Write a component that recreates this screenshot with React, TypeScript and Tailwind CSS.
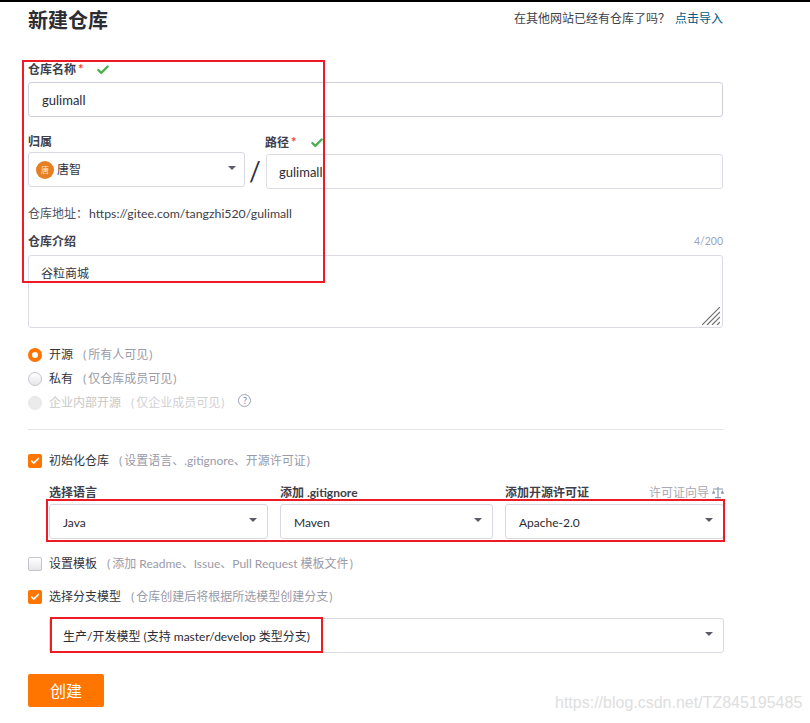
import { Check } from "lucide-react";
import type { ReactNode } from "react";

function Caret() {
  return <span className="h-0 w-0 border-x-[4px] border-t-[4px] border-x-transparent border-t-[#5a5a68]" />;
}

function SelectBox({ value, className, tight }: { value: ReactNode; className: string; tight?: boolean }) {
  return (
    <div className={`flex h-[35px] items-center justify-between rounded-[3px] border border-[#d9d9e3] text-[12px] text-[#2b2b33] ${tight ? "pl-[7px] pr-[8px]" : "pl-[13px] pr-[10px]"} ${className}`}>
      <span className={`flex items-center ${tight ? "" : "pt-[2px]"}`}>{value}</span>
      <span className="-mt-[4px] flex"><Caret /></span>
    </div>
  );
}

function Radio({ state }: { state: "on" | "off" | "disabled" }) {
  if (state === "on") {
    return (
      <span className="flex h-[14px] w-[14px] items-center justify-center rounded-full bg-[#ff7500]">
        <span className="h-[6px] w-[6px] rounded-full bg-white" />
      </span>
    );
  }
  if (state === "disabled") return <span className="h-[14px] w-[14px] rounded-full border border-[#e6e6e6] bg-[#ebebeb]" />;
  return <span className="h-[14px] w-[14px] rounded-full border border-[#c5c5cf] bg-gradient-to-b from-white to-[#e6e6ea]" />;
}

function Box({ checked }: { checked: boolean }) {
  if (!checked) return <span className="h-[14px] w-[14px] rounded-[2px] border border-[#c5c5cf] bg-gradient-to-b from-white to-[#e6e6ea]" />;
  return (
    <span className="flex h-[14px] w-[14px] items-center justify-center rounded-[2px] bg-[#ff7500]">
      <Check className="h-[10px] w-[10px] text-white" strokeWidth={4} />
    </span>
  );
}

function Option({ control, label, note, muted, className }: { control: ReactNode; label: string; note: string; muted?: boolean; className: string }) {
  return (
    <div className={`flex h-[16px] items-center text-[12px] ${className}`}>
      {control}
      <span className={`ml-[7px] ${muted ? "text-[#c8c8c8]" : "text-[#33333b]"}`}>{label}</span>
      <span className={`ml-[10px] ${muted ? "text-[#d0d0d4]" : "text-[#9a9aa8]"}`}>
        <span className="mr-[2px]">(</span>{note}<span className="ml-[1px]">)</span>
      </span>
    </div>
  );
}

function Grip() {
  return (
    <svg className="absolute bottom-[2px] right-[2px]" width="18" height="18" viewBox="0 0 18 18" stroke="#707070" strokeWidth="1.2">
      <path d="M0 18 18 0M5 18 18 5M10 18 18 10M15 18 18 15" />
    </svg>
  );
}

function ScaleIcon() {
  return (
    <svg className="ml-[3px]" width="12" height="12" viewBox="0 0 12 12" fill="#8a9ab0">
      <path d="M5.4 0h1.2v1.5H11V2.6H6.6V10H9v1.2H3V10h2.4V2.6H1V1.5h4.4z" />
      <path d="M0 6.2 1.6 3l1.6 3.2c-.3.8-2.9.8-3.2 0zM8.8 6.2 10.4 3 12 6.2c-.3.8-2.9.8-3.2 0z" />
    </svg>
  );
}

export default function App() {
  return (
    <div
      className="relative h-[723px] w-[810px] overflow-hidden border-t-2 border-black bg-white"
      style={{ fontFamily: 'Lato, "Noto Sans CJK SC", sans-serif' }}
    >
      <div className="ml-[28px] w-[695px]">
        <div className="flex h-[36px] items-center justify-between">
          <h1 className="-mt-[1px] text-[20px] font-bold text-[#2c2c33]">新建仓库</h1>
          <div className="-mt-[2px] text-[12px] text-[#40404a]">
            在其他网站已经有仓库了吗？<span className="ml-[5px] text-[#005980]">点击导入</span>
          </div>
        </div>

        <div className="mt-[23px] flex h-[18px] items-center text-[12px] font-bold text-[#40404a]">
          仓库名称<span className="ml-[2px] text-[13px] text-[#ff3b30]">*</span>
          <Check className="ml-[12px] h-[14px] w-[14px] text-[#4caf50]" strokeWidth={4} />
        </div>
        <div className="mt-[3px] flex h-[35px] items-center rounded-[3px] border border-[#d0d0dc] pl-[13px] pt-[2px] text-[13px] text-[#2b2b33]">gulimall</div>

        <div className="mt-[14px] flex">
          <div className="w-[217px]">
            <div className="h-[21px] pt-[2px] text-[12px] font-bold text-[#40404a]">归属</div>
            <SelectBox
              tight
              className=""
              value={
                <>
                  <span className="flex h-[18px] w-[18px] items-center justify-center rounded-full bg-[#e67e22] text-[8px] text-[#ffe4cc]">唐</span>
                  <span className="ml-[3px] text-[#33333b]">唐智</span>
                </>
              }
            />
          </div>
          <div className="mt-[23px] w-[21px] pl-[4px] text-[26px] leading-[35px] text-[#2c2c40]">/</div>
          <div className="flex-1">
            <div className="-ml-[1px] flex h-[23px] items-center text-[12px] font-bold text-[#40404a]">
              路径<span className="ml-[2px] text-[13px] text-[#ff3b30]">*</span>
              <Check className="ml-[13px] h-[14px] w-[14px] text-[#4caf50]" strokeWidth={4} />
            </div>
            <div className="flex h-[35px] items-center rounded-[3px] border border-[#dcdce4] pl-[12px] pt-[2px] text-[13px] text-[#2b2b33]">gulimall</div>
          </div>
        </div>

        <div className="mt-[16px] h-[18px] text-[12px] leading-[18px] text-[#50505c]">
          仓库地址：<span className="ml-[1px] text-[12.3px] text-[#40404a]">https://gitee.com/tangzhi520/gulimall</span>
        </div>

        <div className="mt-[10px] flex h-[18px] items-center justify-between text-[12px]">
          <span className="font-bold text-[#40404a]">仓库介绍</span>
          <span className="text-[10.5px] text-[#9aa3c0]">4/200</span>
        </div>
        <div className="relative mt-[4px] h-[73px] rounded-[3px] border border-[#dcdce4] pl-[12px] pt-[9px] text-[12px] leading-[18px] text-[#33333b]">
          谷粒商城
          <Grip />
        </div>

        <Option className="mt-[19px]" control={<Radio state="on" />} label="开源" note="所有人可见" />
        <Option className="mt-[8px]" control={<Radio state="off" />} label="私有" note="仅仓库成员可见" />
        <div className="mt-[8px] flex items-center">
          <Option className="" muted control={<Radio state="disabled" />} label="企业内部开源" note="仅企业成员可见" />
          <span className="-mt-[6px] ml-[14px] flex h-[13px] w-[13px] items-center justify-center rounded-full border border-[#9aa3b8] text-[9px] leading-none text-[#7a84a0]">?</span>
        </div>

        <div className="mt-[18px] h-[1px] bg-[#e3e3e8]" />

        <Option className="mt-[23px]" control={<Box checked />} label="初始化仓库" note="设置语言、.gitignore、开源许可证" />

        <div className="ml-[21px] mt-[15px] grid grid-cols-[219px_213px_219px] gap-x-[12px]">
          <div className="h-[18px] text-[12px] font-bold leading-[18px] text-[#40404a]">选择语言</div>
          <div className="h-[18px] text-[12px] font-bold leading-[18px] text-[#40404a]">添加 .gitignore</div>
          <div className="flex h-[18px] items-center justify-between text-[12px] leading-[18px]">
            <span className="font-bold text-[#40404a]">添加开源许可证</span>
            <span className="flex items-center text-[#a8a8b4]">许可证向导<ScaleIcon /></span>
          </div>
          <SelectBox className="mt-[2px]" value="Java" />
          <SelectBox className="mt-[2px]" value="Maven" />
          <SelectBox className="mt-[2px]" value="Apache-2.0" />
        </div>

        <Option className="mt-[17px]" control={<Box checked={false} />} label="设置模板" note="添加 Readme、Issue、Pull Request 模板文件" />
        <Option className="mt-[17px]" control={<Box checked />} label="选择分支模型" note="仓库创建后将根据所选模型创建分支" />

        <SelectBox className="ml-[21px] mt-[13px] w-[675px]" value="生产/开发模型 (支持 master/develop 类型分支)" />

        <button className="mt-[21px] flex h-[33px] w-[76px] items-center justify-center rounded-[2px] bg-[#ff7500] text-[16px] text-white">创建</button>
      </div>

      {/* annotations drawn over the form */}
      <div className="absolute left-[22px] top-[58px] h-[223px] w-[303px] border-2 border-[#ed1c24]" />
      <div className="absolute left-[46px] top-[497px] h-[43px] w-[679px] border-2 border-[#ed1c24]" />
      <div className="absolute left-[50px] top-[615px] h-[36px] w-[273px] border-2 border-[#ed1c24]" />
      <div className="absolute left-[555px] top-[689px] text-[16px] text-[#dedede]" style={{ fontFamily: '"Liberation Sans", sans-serif' }}>
        https://blog.csdn.net/TZ845195485
      </div>
    </div>
  );
}
